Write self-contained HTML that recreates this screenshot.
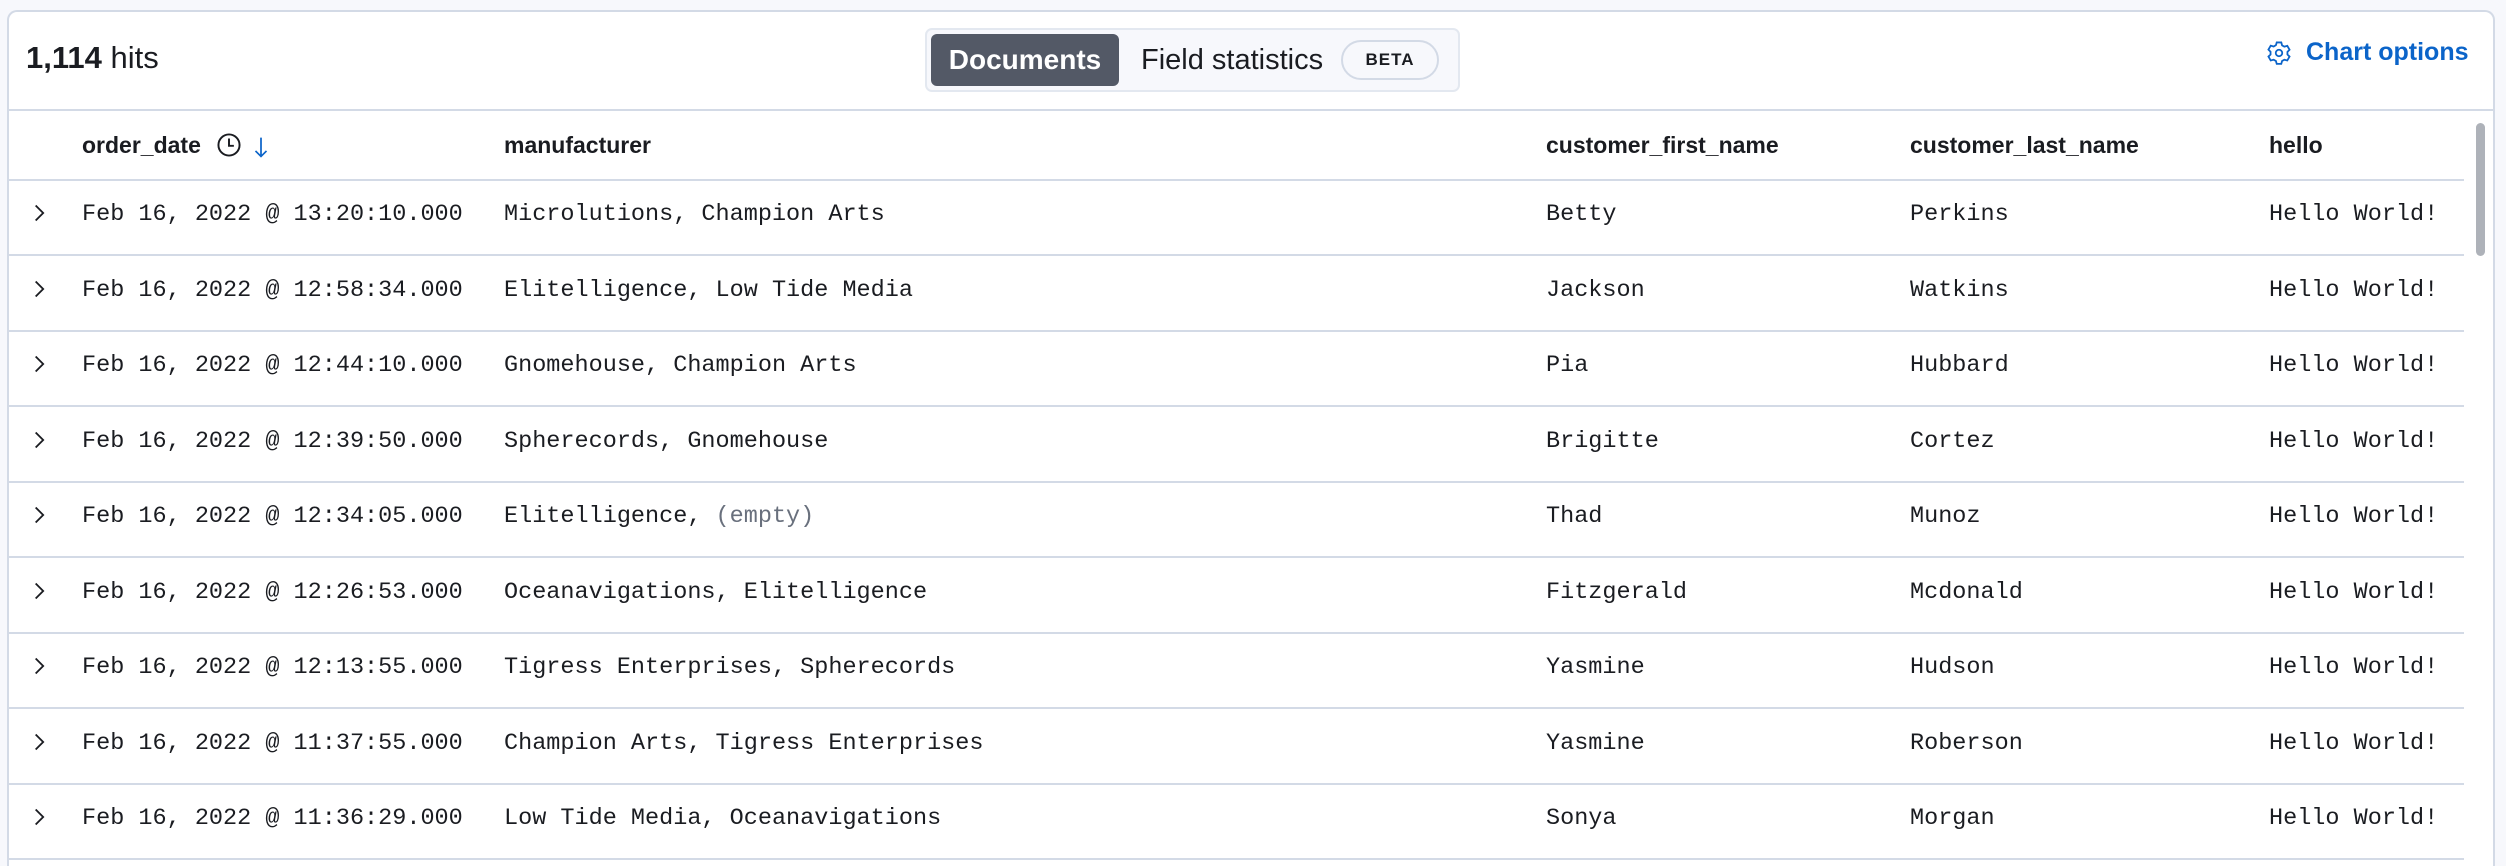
<!DOCTYPE html>
<html><head><meta charset="utf-8"><style>
*{box-sizing:border-box;margin:0;padding:0}
html,body{width:2506px;height:866px;overflow:hidden}
body{background:#f7f8fc;position:relative;font-family:"Liberation Sans",sans-serif;color:#1a1c21}
.panel{position:absolute;left:7px;top:10px;width:2488px;height:856px;background:#fff;border:2px solid #d3dae6;border-bottom:none;border-radius:10px 10px 0 0;overflow:hidden}
.abs{position:absolute;white-space:nowrap}
.hits{left:17px;top:28px;font-size:31px}
.tog{left:916px;top:16px;width:535px;height:64px;border:2px solid #e3e8f0;background:#f7f8fc;border-radius:7px}
.docs{left:4px;top:4px;width:188px;height:52px;background:#535966;border-radius:6px;color:#fff;font-weight:bold;font-size:28px;line-height:52px;text-align:center}
.fs{left:214px;top:0;line-height:60px;font-size:29px;color:#1a1c21}
.beta{left:414px;top:10px;width:98px;height:40px;border:2px solid #d3dae6;border-radius:20px;font-size:17px;font-weight:bold;letter-spacing:1px;text-align:center;line-height:36px}
.co{left:2297px;top:26px;font-size:25px;color:#0b64c9;font-weight:bold}
.hline{position:absolute;left:0;height:2px;background:#d3dae6}
.th{font-weight:bold;font-size:23px;top:109px;line-height:48px}
.td{font-family:"Liberation Mono",monospace;font-size:23.5px;line-height:40px}
.sb{left:2467px;top:111px;width:9px;height:133px;border-radius:5px;background:#aeb2b9}
</style></head><body>
<div class="panel">
<div class="abs hits"><b>1,114</b> hits</div>
<div class="abs tog">
 <div class="abs docs">Documents</div>
 <div class="abs fs">Field statistics</div>
 <div class="abs beta">BETA</div>
</div>
<svg class="abs" style="left:2257px;top:28px" width="26" height="26" viewBox="0 0 16 16" fill="none" stroke="#0b64c9" stroke-width="1.1"><path d="M6.6 1.5h2.8l.5 1.8 1.4.8 1.8-.5 1.4 2.4-1.3 1.3v1.6l1.3 1.3-1.4 2.4-1.8-.5-1.4.8-.5 1.8H6.6l-.5-1.8-1.4-.8-1.8.5-1.4-2.4 1.3-1.3V7.2L1.5 5.9l1.4-2.4 1.8.5 1.4-.8z"/><circle cx="8" cy="8" r="2"/></svg>
<div class="abs co">Chart options</div>
<div class="hline" style="top:97px;width:2488px"></div>
<div class="abs th" style="left:73px">order_date</div>
<svg class="abs" style="left:207px;top:120px" width="26" height="26" viewBox="0 0 16 16" fill="none" stroke="#1a1c21" stroke-width="1.2"><circle cx="8" cy="8" r="6.5"/><path d="M8 4v4.5h3"/></svg>
<svg class="abs" style="left:244px;top:124px" width="16" height="22" viewBox="0 0 10 14" fill="none" stroke="#0b64c9" stroke-width="1.1"><path d="M5 1v12M1.5 9.5L5 13l3.5-3.5"/></svg>
<div class="abs th" style="left:495px">manufacturer</div>
<div class="abs th" style="left:1537px">customer_first_name</div>
<div class="abs th" style="left:1901px">customer_last_name</div>
<div class="abs th" style="left:2260px">hello</div>
<div class="hline" style="top:167px;width:2455px"></div>
<div class="abs sb"></div>
<div id="rows"></div>
</div>
<script>
var d=[["13:20:10","Microlutions, Champion Arts","Betty","Perkins"],["12:58:34","Elitelligence, Low Tide Media","Jackson","Watkins"],["12:44:10","Gnomehouse, Champion Arts","Pia","Hubbard"],["12:39:50","Spherecords, Gnomehouse","Brigitte","Cortez"],["12:34:05","Elitelligence, <span style='color:#69707d'>(empty)</span>","Thad","Munoz"],["12:26:53","Oceanavigations, Elitelligence","Fitzgerald","Mcdonald"],["12:13:55","Tigress Enterprises, Spherecords","Yasmine","Hudson"],["11:37:55","Champion Arts, Tigress Enterprises","Yasmine","Roberson"],["11:36:29","Low Tide Media, Oceanavigations","Sonya","Morgan"]];
var h="";
d.forEach(function(r,i){var t=169+i*75.5;var c=t+14;
h+='<svg class="abs" style="left:23px;top:'+(c+8)+'px" width="14" height="20" viewBox="0 0 8 12" fill="none" stroke="#1a1c21" stroke-width="1.1"><path d="M2 1.5l4.5 4.5L2 10.5"/></svg>';
h+='<div class="abs td" style="left:73px;top:'+c+'px">Feb 16, 2022 @ '+r[0]+'.000</div>';
h+='<div class="abs td" style="left:495px;top:'+c+'px">'+r[1]+'</div>';
h+='<div class="abs td" style="left:1537px;top:'+c+'px">'+r[2]+'</div>';
h+='<div class="abs td" style="left:1901px;top:'+c+'px">'+r[3]+'</div>';
h+='<div class="abs td" style="left:2260px;top:'+c+'px">Hello World!</div>';
h+='<div class="hline" style="top:'+(t+73)+'px;width:2455px"></div>';});
document.getElementById("rows").innerHTML=h;
</script>
</body></html>
